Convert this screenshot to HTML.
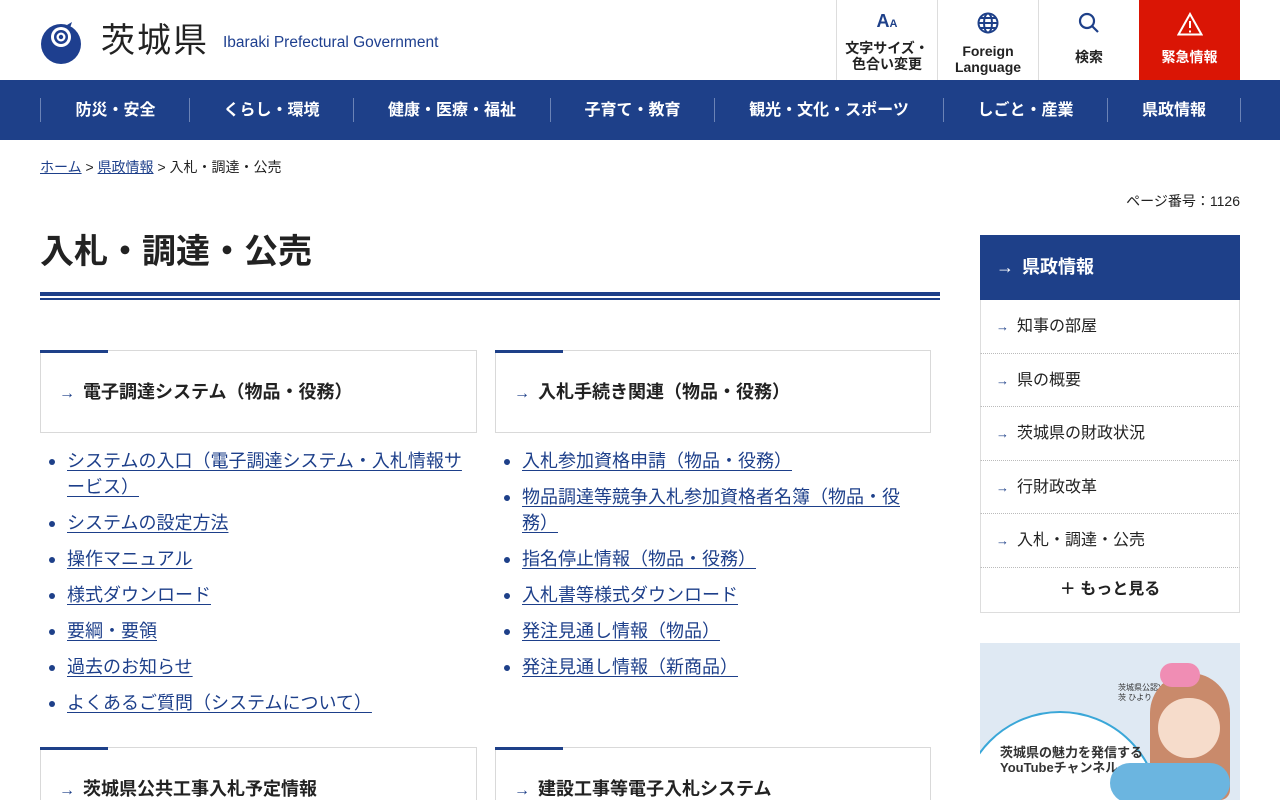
<!DOCTYPE html>
<html style="overflow:hidden;height:800px"><head><meta charset="utf-8"><style>
*{margin:0;padding:0;box-sizing:border-box}
body{width:1280px;height:800px;overflow:hidden;background:#fff;font-family:"Liberation Sans","Noto Sans CJK JP",sans-serif;color:#222;position:relative}
.abs{position:absolute}
a{color:#1d3f8a}
.hdr-btn{position:absolute;top:0;width:101px;height:80px;border-left:1px solid #ddd;text-align:center;font-size:14px;font-weight:bold;line-height:16px;color:#222}
.nav{position:absolute;top:80px;left:0;width:1280px;height:60px;background:#1e4089}
.nav div{position:absolute;top:18px;height:24px;border-left:1px solid #6b83b6;color:#fff;font-weight:bold;font-size:16px;text-align:center;line-height:26px}
.card{position:absolute;height:83px;border:1px solid #d9d9d9;font-size:18px;font-weight:bold;line-height:83px;padding-left:18px}
.card:before{content:"";position:absolute;left:-1px;top:-1px;width:68px;height:3px;background:#1e4089}
.ar{color:#1e4089;font-weight:normal;margin-right:8px;font-size:16px}
ul{position:absolute;list-style:none;font-size:18px;line-height:26px}
li{position:relative;padding-left:27px;margin-bottom:10px}
li:before{content:"";position:absolute;left:9px;top:11px;width:6px;height:6px;border-radius:50%;background:#1e4089}
li a{text-decoration:underline;text-underline-offset:3px}
.side{position:absolute;left:980px;width:260px}
.si{height:53.5px;border-left:1px solid #ddd;border-right:1px solid #ddd;border-bottom:1px dotted #bbb;font-size:16px;line-height:53px;padding-left:15px}
</style></head><body>
<svg class="abs" style="left:40px;top:22px" width="42" height="42" viewBox="0 0 42 42"><circle cx="21" cy="22" r="20" fill="#1e3f8f"/><circle cx="21" cy="15" r="10" fill="#fff"/><circle cx="21" cy="15" r="7" fill="#1e3f8f"/><circle cx="21" cy="15" r="4.5" fill="#fff"/><circle cx="21" cy="15" r="2.2" fill="#1e3f8f"/><path d="M27 3 L32 0 L30 6Z" fill="#1e3f8f"/></svg>
<div class="abs" style="left:101px;top:20px;font-size:34px;color:#222;letter-spacing:2px;line-height:42px">茨城県</div>
<div class="abs" style="left:223px;top:34px;font-size:15.5px;color:#1e3f8f;line-height:18px">Ibaraki Prefectural Government</div>
<div class="hdr-btn" style="left:836px"><div style="margin-top:10px;height:22px;color:#1e4089;font-size:18px;line-height:22px">A<span style="font-size:11px">A</span></div><div style="margin-top:8px">文字サイズ・<br>色合い変更</div></div>
<div class="hdr-btn" style="left:937px"><svg style="margin-top:12px" width="22" height="22" viewBox="0 0 22 22" fill="none" stroke="#1e4089" stroke-width="2"><circle cx="11" cy="11" r="9.5"/><ellipse cx="11" cy="11" rx="4" ry="9.5"/><path d="M1.5 11H20.5M3 6H19M3 16H19"/></svg><div style="margin-top:6px">Foreign<br>Language</div></div>
<div class="hdr-btn" style="left:1038px"><svg style="margin-top:12px" width="22" height="22" viewBox="0 0 22 22" fill="none" stroke="#1e4089" stroke-width="2.2"><circle cx="9" cy="9" r="7"/><path d="M14 14L20 20"/></svg><div style="margin-top:12px">検索</div></div>
<div class="hdr-btn" style="left:1139px;background:#da1505;color:#fff;border:none"><svg style="margin-top:12px" width="26" height="24" viewBox="0 0 26 24" fill="none" stroke="#fff" stroke-width="2"><path d="M13 2L24.5 22.5H1.5Z"/><path d="M13 9V16M13 18.5V20.5"/></svg><div style="margin-top:10px">緊急情報</div></div>
<div class="nav">
<div style="left:40px;width:150px">防災・安全</div>
<div style="left:189px;width:164px">くらし・環境</div>
<div style="left:353px;width:197px">健康・医療・福祉</div>
<div style="left:550px;width:164px">子育て・教育</div>
<div style="left:714px;width:229px">観光・文化・スポーツ</div>
<div style="left:943px;width:164px">しごと・産業</div>
<div style="left:1107px;width:134px;border-right:1px solid #6b83b6">県政情報</div>
</div>
<div class="abs" style="left:40px;top:158px;font-size:14px;line-height:18px"><a href="#">ホーム</a> &gt; <a href="#">県政情報</a> &gt; 入札・調達・公売</div>
<div class="abs" style="right:40px;top:192px;font-size:14px;line-height:18px">ページ番号：1126</div>
<div class="abs" style="left:40px;top:230px;font-size:34px;font-weight:bold;line-height:44px;color:#222">入札・調達・公売</div>
<div class="abs" style="left:40px;top:292px;width:900px;height:4px;background:#1e4089"></div>
<div class="abs" style="left:40px;top:298px;width:900px;height:2px;background:#1e4089"></div>
<div class="card" style="left:40px;top:350px;width:437px"><span class="ar">→</span>電子調達システム（物品・役務）</div>
<div class="card" style="left:495px;top:350px;width:436px"><span class="ar">→</span>入札手続き関連（物品・役務）</div>
<ul style="left:40px;top:448px;width:430px">
<li><a href="#">システムの入口（電子調達システム・入札情報サービス）</a></li>
<li><a href="#">システムの設定方法</a></li>
<li><a href="#">操作マニュアル</a></li>
<li><a href="#">様式ダウンロード</a></li>
<li><a href="#">要綱・要領</a></li>
<li><a href="#">過去のお知らせ</a></li>
<li><a href="#">よくあるご質問（システムについて）</a></li>
</ul>
<ul style="left:495px;top:448px;width:412px">
<li><a href="#">入札参加資格申請（物品・役務）</a></li>
<li><a href="#">物品調達等競争入札参加資格者名簿（物品・役務）</a></li>
<li><a href="#">指名停止情報（物品・役務）</a></li>
<li><a href="#">入札書等様式ダウンロード</a></li>
<li><a href="#">発注見通し情報（物品）</a></li>
<li><a href="#">発注見通し情報（新商品）</a></li>
</ul>
<div class="card" style="left:40px;top:747px;width:437px;height:53px;border-bottom:none"><span class="ar">→</span>茨城県公共工事入札予定情報</div>
<div class="card" style="left:495px;top:747px;width:436px;height:53px;border-bottom:none"><span class="ar">→</span>建設工事等電子入札システム</div>
<div class="side" style="top:235px">
<div style="height:65px;background:#1e4089;color:#fff;font-size:18px;font-weight:bold;line-height:65px;padding-left:16px"><span style="font-weight:normal;margin-right:8px">→</span>県政情報</div>
<div class="si"><span class="ar" style="font-size:13px">→</span>知事の部屋</div>
<div class="si"><span class="ar" style="font-size:13px">→</span>県の概要</div>
<div class="si"><span class="ar" style="font-size:13px">→</span>茨城県の財政状況</div>
<div class="si"><span class="ar" style="font-size:13px">→</span>行財政改革</div>
<div class="si"><span class="ar" style="font-size:13px">→</span>入札・調達・公売</div>
<div style="height:45px;border:1px solid #ddd;border-top:none;text-align:center;font-size:16px;font-weight:bold;line-height:44px">＋ もっと見る</div>
</div>
<div class="abs" style="left:980px;top:643px;width:260px;height:157px;background:#dfe9f3;overflow:hidden">
<div class="abs" style="left:-20px;top:68px;width:200px;height:200px;border-radius:50%;background:#fff;border:2px solid #3aa7d8"></div>
<div class="abs" style="left:138px;top:40px;font-size:8px;line-height:10px;color:#333">茨城県公認Ytuber<br>茨 ひより</div>
<div class="abs" style="left:20px;top:102px;font-size:13px;font-weight:bold;line-height:15px;color:#333">茨城県の魅力を発信する<br>YouTubeチャンネル</div>
<div class="abs" style="left:170px;top:30px;width:80px;height:127px;background:#c98a6b;border-radius:40px 40px 10px 10px"></div>
<div class="abs" style="left:178px;top:55px;width:62px;height:60px;background:#f6dccb;border-radius:30px"></div>
<div class="abs" style="left:130px;top:120px;width:120px;height:40px;background:#6bb5e0;border-radius:20px"></div>
<div class="abs" style="left:180px;top:20px;width:40px;height:24px;background:#f08db4;border-radius:20px"></div>
</div>
</body></html>
